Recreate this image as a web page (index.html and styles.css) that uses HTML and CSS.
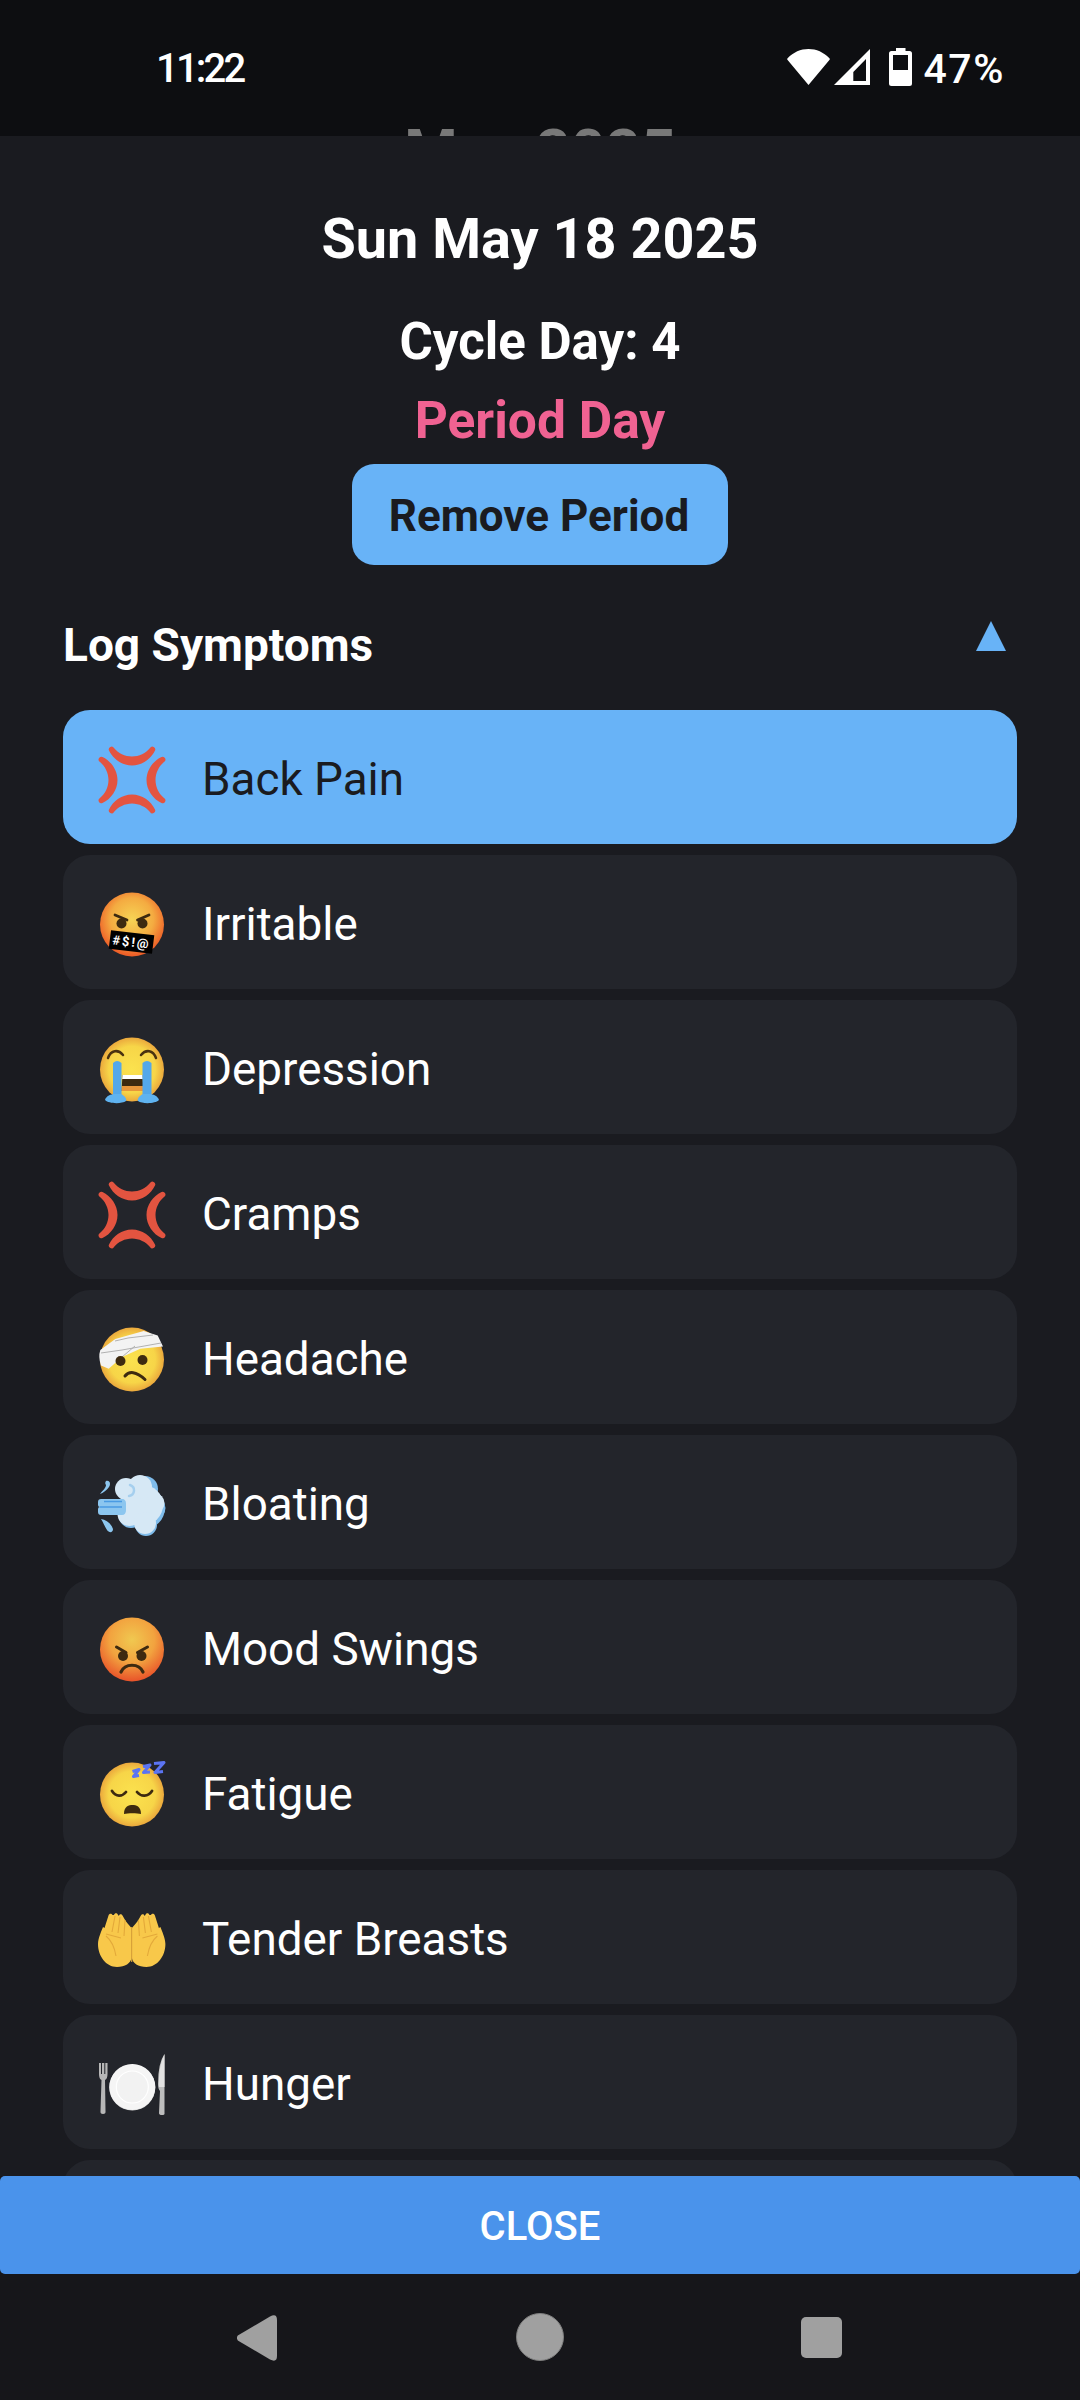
FILE: index.html
```html
<!DOCTYPE html>
<html lang="en">
<head>
<meta charset="utf-8">
<title>Sun May 18 2025</title>
<link rel="stylesheet" href="styles.css">
</head>
<body>
<div class="screen">
  <header class="backdrop">
    <div class="status">
      <span class="time">11:22</span>
      <div class="status-right">
        <svg class="ic-wifi" viewBox="0 0 43 36"><path d="M21.5 36 L0.4 10.8 Q-0.2 10 0.6 9.2 C6.5 3.2 13.5 0 21.5 0 C29.5 0 36.5 3.2 42.4 9.2 Q43.2 10 42.6 10.8 Z"/></svg>
        <svg class="ic-signal" viewBox="0 0 36 36"><path fill-rule="evenodd" d="M36 0 V36 H0 Z M32 10 L19.3 23 V32 H32 Z"/></svg>
        <svg class="ic-battery" viewBox="0 0 23 38"><path fill-rule="evenodd" d="M7 0 H16.5 V3 H20.5 Q23 3 23 5.5 V35.5 Q23 38 20.5 38 H2.5 Q0 38 0 35.5 V5.5 Q0 3 2.5 3 H7 Z M4 7 V22 H19 V7 Z"/></svg>
        <span class="pct">47%</span>
      </div>
    </div>
    <div class="month">May 2025</div>
  </header>

  <main class="sheet">
    <h1 class="date">Sun May 18 2025</h1>
    <p class="cycle">Cycle Day: 4</p>
    <p class="period">Period Day</p>
    <div class="action"><button class="remove">Remove Period</button></div>
    <div class="log-head">
      <h2 class="log-title">Log Symptoms</h2>
      <svg class="caret" viewBox="0 0 30 30"><path d="M15 0 L30 30 H0 Z"/></svg>
    </div>

    <svg class="defs" aria-hidden="true">
      <symbol id="anger" viewBox="0 0 68 68">
        <g fill="#e35440">
          <path id="arc" d="M11 4.5 A2.8 2.8 0 0 1 16 2 C20 7 27 10.5 34 10.5 C41 10.5 48 7 52 2 A2.8 2.8 0 0 1 57 4.5 C53 13 44 19.5 34 19.5 C24 19.5 15 13 11 4.5 Z"/>
          <use href="#arc" transform="rotate(90 34 34)"/>
          <use href="#arc" transform="rotate(180 34 34)"/>
          <use href="#arc" transform="rotate(270 34 34)"/>
        </g>
      </symbol>
      <radialGradient id="yellow" cx="50%" cy="50%" r="52%">
        <stop offset="0" stop-color="#fbe24e"/><stop offset=".7" stop-color="#f7d548"/><stop offset="1" stop-color="#e9a23b"/>
      </radialGradient>
      <radialGradient id="hot" cx="50%" cy="42%" r="56%">
        <stop offset="0" stop-color="#f6d455"/><stop offset=".6" stop-color="#f4ab41"/><stop offset="1" stop-color="#ee5f28"/>
      </radialGradient>
      <radialGradient id="red" cx="50%" cy="35%" r="64%">
        <stop offset="0" stop-color="#f0c850"/><stop offset=".55" stop-color="#f2a33f"/><stop offset="1" stop-color="#e9552a"/>
      </radialGradient>
    </svg>

    <ul class="list">
      <li class="row selected">
        <svg class="emoji"><use href="#anger"/></svg>
        <span class="label">Back Pain</span>
      </li>
      <li class="row">
        <svg class="emoji" viewBox="0 0 68 68" aria-hidden="true">
          <circle cx="34" cy="33.5" r="32" fill="url(#hot)"/>
          <path d="M17 24 L29 29 M51 24 L39.5 29" stroke="#3d2a10" stroke-width="2.8" stroke-linecap="round" fill="none"/>
          <circle cx="23.5" cy="32.5" r="5" fill="#3d2a10"/><circle cx="44.5" cy="32.5" r="5" fill="#3d2a10"/>
          <path d="M13 39.3 L56.3 44.3 L54 62.7 L10.7 57.7 Z" fill="#000"/>
          <text class="curse" x="33.5" y="55.5" text-anchor="middle" transform="rotate(6.5 33.5 51)">#$!@</text>
        </svg>
        <span class="label">Irritable</span>
      </li>
      <li class="row">
        <svg class="emoji" viewBox="0 0 68 68" aria-hidden="true">
          <circle cx="34" cy="33.5" r="32" fill="url(#yellow)"/>
          <path d="M10 22 C13 14 20 13 25 19 M43 19 C48 13 55 14 58 22" stroke="#4a3210" stroke-width="2.5" fill="none" stroke-linecap="round"/>
          <path d="M24.5 39 H44.5 L45.5 55 H23.5 Z" fill="#3d2a10"/>
          <path d="M24.5 39 H44.5 L44.8 43 H24.2 Z" fill="#fff"/>
          <path d="M24 50 H45 L45.5 55 H23.5 Z" fill="#e8973b"/>
          <path d="M15 27 Q19 23 23.5 27 V60 H15 Z M44.5 27 Q49 23 53.5 27 V60 H44.5 Z" fill="#54a8ea"/>
          <path d="M7 64 C8 60 13 58 17 58 L23 58 C27 60 29 63 28 65 C24 68 11 68 7 64 Z M40 65 C39 63 41 60 45 58 L51 58 C55 58 60 60 61 64 C57 68 44 68 40 65 Z" fill="#5fb3f0"/>
        </svg>
        <span class="label">Depression</span>
      </li>
      <li class="row">
        <svg class="emoji"><use href="#anger"/></svg>
        <span class="label">Cramps</span>
      </li>
      <li class="row">
        <svg class="emoji" viewBox="0 0 68 68" aria-hidden="true">
          <circle cx="34" cy="33.5" r="32" fill="url(#yellow)"/>
          <path d="M2.3 24 L17.3 13 L45.7 5 L59.7 9.5 L65 20.5 L42.3 22.7 L24 31 L10.7 42.7 L3 39.5 Q0 31 2.3 24 Z" fill="#f3f3f3"/>
          <path d="M3 27 L24 24 L63 17 M17 15 L30 12 L55 9 M24 31 L37 20" stroke="#a9a9a9" stroke-width=".9" fill="none"/>
          <circle cx="22.5" cy="35" r="5" fill="#3d2a10"/><circle cx="44.5" cy="34" r="5" fill="#3d2a10"/>
          <path d="M27 50 C31 45 38 45 47 53.5" stroke="#3d2a10" stroke-width="3" fill="none" stroke-linecap="round"/>
        </svg>
        <span class="label">Headache</span>
      </li>
      <li class="row">
        <svg class="emoji" viewBox="0 0 68 68" aria-hidden="true">
          <g fill="#7fbceb">
            <circle cx="46" cy="37" r="21"/><circle cx="34" cy="21" r="13"/><circle cx="47" cy="18" r="13"/><circle cx="33" cy="45" r="12"/><circle cx="48" cy="54" r="11"/><circle cx="58" cy="37" r="9.5"/>
          </g>
          <g fill="#d6e8f5">
            <circle cx="45" cy="34" r="20"/><circle cx="28" cy="18" r="11"/><circle cx="42" cy="16" r="12"/><circle cx="31.5" cy="43" r="12"/><circle cx="47" cy="52" r="11"/><circle cx="57" cy="32" r="9.5"/>
          </g>
          <path d="M32 14 C38 16 37 24 31 25" stroke="#a5cfee" stroke-width="2.5" fill="none" stroke-linecap="round"/>
          <path d="M3 28 H24 Q28 28 28 32.5 V39 Q28 44 24 44 H3 Q0 44 0 41 V38 Q0 36 2 36 Q0 36 0 34 V31 Q0 28 3 28 Z" fill="#8cc6ef"/>
          <path d="M2 36 H24 M6 30.5 H24" stroke="#4a9be3" stroke-width="1.3"/>
          <path d="M8 10 C12 9 13 13 11 16 C9 19 5 22 2 23 C5 19 8 17 8 14 C7 13 7 11 8 10 Z M3 48 C8 49 13 52 15 58 C15 62 11 62 9 59 C7 56 5 51 3 48 Z" fill="#8cc6ef"/>
        </svg>
        <span class="label">Bloating</span>
      </li>
      <li class="row">
        <svg class="emoji" viewBox="0 0 68 68" aria-hidden="true">
          <circle cx="34" cy="33.5" r="32" fill="url(#red)"/>
          <path d="M18.5 31 L28 36.5 M49.5 31 L39.5 36.5" stroke="#3d2a10" stroke-width="3" stroke-linecap="round"/>
          <circle cx="25" cy="40" r="5" fill="#3d2a10"/><circle cx="43.5" cy="40" r="5" fill="#3d2a10"/>
          <path d="M23 56 C27 47 41 47 45 56" stroke="#3d2a10" stroke-width="3.2" fill="none" stroke-linecap="round"/>
        </svg>
        <span class="label">Mood Swings</span>
      </li>
      <li class="row">
        <svg class="emoji" viewBox="0 0 68 68" aria-hidden="true">
          <circle cx="34" cy="33.5" r="32" fill="url(#yellow)"/>
          <path d="M14 30 C18 36 24 36 28 31 M39 31 C43 36 50 36 54 30" stroke="#3d2a10" stroke-width="2.8" fill="none" stroke-linecap="round"/>
          <path d="M26 53 C26 45 31 44 34.5 44 C38 44 43 45 43 53 C39 52 30 52 26 53 Z" fill="#3d2a10"/>
          <path d="M34.5 10.5 L41 8.5 L35.5 15.5 L41 14.5 M45 5.5 L52 4 L45.5 11.5 L52 11 M56 2.5 L66 1.5 L57 11.5 L65 10.5" stroke="#5b74f2" stroke-width="3" fill="none" stroke-linejoin="round"/>
        </svg>
        <span class="label">Fatigue</span>
      </li>
      <li class="row">
        <svg class="emoji" viewBox="0 0 68 68" aria-hidden="true">
          <g fill="#f8c84a">
            <path id="hand" d="M33.5 22 C31 19 28 16 26.5 13 L24.5 9.5 C23.5 7.5 21 8 21 10 L20 9 C19.5 6.5 16.5 6.5 16 9 L14.5 9 C13.5 7 11 7.5 10.5 9.5 L6.5 22 L5 21 C4 24 0 32 0 38 C0 50 8 61 19 61 C27 61 33 57 33.5 52 Z"/>
            <use href="#hand" transform="matrix(-1 0 0 1 67.4 0)"/>
          </g>
          <path d="M33.7 21 V56 M17 10 L14 26 M22 11 L20 27 M27 14 L26 30 M8 28 L23 32 M8 30 C14 35 17 44 18 50 M59.4 28 L44.4 32 M59.4 30 C53.4 35 50.4 44 49.4 50 M50.4 10 L53.4 26 M45.4 11 L47.4 27 M40.4 14 L41.4 30" stroke="#e3a93a" stroke-width="1.1" fill="none"/>
        </svg>
        <span class="label">Tender Breasts</span>
      </li>
      <li class="row">
        <svg class="emoji" viewBox="0 0 68 68" aria-hidden="true">
          <circle cx="34.3" cy="36.5" r="23" fill="#cfcfcf"/>
          <circle cx="34.3" cy="36" r="23" fill="#f5f5f5"/>
          <circle cx="34.3" cy="36" r="16" fill="#f2f2f2" stroke="#fff" stroke-width="1.2"/>
          <path d="M1 12 H9.5 V23 Q9.5 28 7 29 L7.5 60 Q8 63 5 63 Q2 63 2.5 60 L3.5 29 Q1 28 1 23 Z" fill="#b7b7b7"/>
          <path d="M3.5 12 V23 M6.8 12 V23" stroke="#23252b" stroke-width="1"/>
          <path d="M66.5 3 V62 Q67 64 64 64 Q61 64 61 62 L62 40 Q60 38 60 33 Q60 12 66.5 3 Z" fill="#bdbdbd"/>
          <path d="M66.5 3 V36 H61 Q60 16 66.5 3 Z" fill="#e2e2e2"/>
        </svg>
        <span class="label">Hunger</span>
      </li>
      <li class="row"></li>
    </ul>
  </main>

  <button class="close">CLOSE</button>

  <nav class="nav">
    <svg class="nav-back" viewBox="0 0 40 46"><path d="M0.8 25.5 Q-1 23 0.8 20.5 L33 1.5 Q40 -2 40 5 V41 Q40 48 33 44.5 Z"/></svg>
    <svg class="nav-home" viewBox="0 0 48 48"><circle cx="24" cy="24" r="23.5" fill="#a0a0a0" stroke="#7d7d7d" stroke-width="1"/></svg>
    <div class="nav-recent"></div>
  </nav>
</div>
</body>
</html>
```
FILE: styles.css
```css
* { box-sizing: border-box; }
html, body { margin: 0; padding: 0; background: #16161a; }
body { font-family: Roboto, "Liberation Sans", sans-serif; color: #fff; }

.screen { width: 1080px; height: 2400px; display: flex; flex-direction: column; overflow: hidden; }

.backdrop { height: 136px; flex: none; background: #0d0e11; overflow: hidden; }
.status { height: 96px; padding: 38px 77px 0 156px; display: flex; justify-content: space-between; align-items: center; }
.time, .pct { font-weight: 500; line-height: 58px; padding-top: 3px; }
.time { font-size: 40px; letter-spacing: -2.8px; }
.pct { font-size: 41px; letter-spacing: 1.6px; margin-left: 11px; margin-right: -2px; }
.status-right { display: flex; align-items: center; }
.status-right svg { fill: #fff; display: block; }
.ic-wifi { width: 43px; height: 36px; }
.ic-signal { width: 36px; height: 36px; margin-left: 4px; }
.ic-battery { width: 23px; height: 38px; margin-left: 19px; }
.month { margin-top: 23px; text-align: center; font-size: 61px; font-weight: 700; line-height: 66px; color: #787878; }

.sheet { flex: 1; min-height: 0; background: #1a1b20; overflow: hidden; padding: 64px 63px 0; }
.date { margin: 0; text-align: center; font-size: 55.8px; font-weight: 700; line-height: 78px; }
.cycle { margin: 25px 0 0; text-align: center; font-size: 51px; font-weight: 700; line-height: 78px; }
.period { margin: 1px 0 0; text-align: center; font-size: 51.5px; font-weight: 700; line-height: 78px; color: #f06292; }
.action { display: flex; justify-content: center; margin-top: 4px; }
.remove { width: 376px; height: 101px; border: 0; border-radius: 22px; background: #68b3f7; color: #1a1b20; font: 700 44px/1 Roboto, sans-serif; padding: 3px 2px 0 0; }

.log-head { display: flex; justify-content: space-between; align-items: flex-start; height: 145px; padding-top: 45px; }
.log-title { margin: 0; font-size: 46px; font-weight: 700; line-height: 70px; }
.caret { width: 30px; height: 30px; fill: #68b3f7; margin: 11px 11px 0 0; }

.defs { width: 0; height: 0; display: block; }

.list { list-style: none; margin: 0; padding: 0; display: flex; flex-direction: column; gap: 11px; }
.row { height: 134px; flex: none; display: flex; align-items: center; gap: 36px; padding-left: 35px; background: #23252b; border-radius: 27px; }
.row.selected { background: #68b3f7; color: #1a1b20; }
.emoji { width: 68px; height: 68px; flex: none; margin-top: 6px; }
.label { font-size: 45.8px; line-height: 60px; margin-top: 6px; }
.curse { font: 700 13px Roboto, sans-serif; fill: #fff; letter-spacing: 2px; }

.close { height: 98px; flex: none; width: 100%; border: 0; padding: 3px 0 0; border-radius: 5px; background: #4a93eb; color: #fff; font: 500 40px/1 Roboto, sans-serif; }

.nav { height: 126px; flex: none; background: #16161a; position: relative; }
.nav-back, .nav-home, .nav-recent { position: absolute; }
.nav-back { left: 237px; top: 41px; width: 40px; height: 46px; fill: #a0a0a0; }
.nav-home { left: 516px; top: 39px; width: 48px; height: 48px; }
.nav-recent { left: 801px; top: 43px; width: 41px; height: 41px; border-radius: 5px; background: #a0a0a0; }
```
